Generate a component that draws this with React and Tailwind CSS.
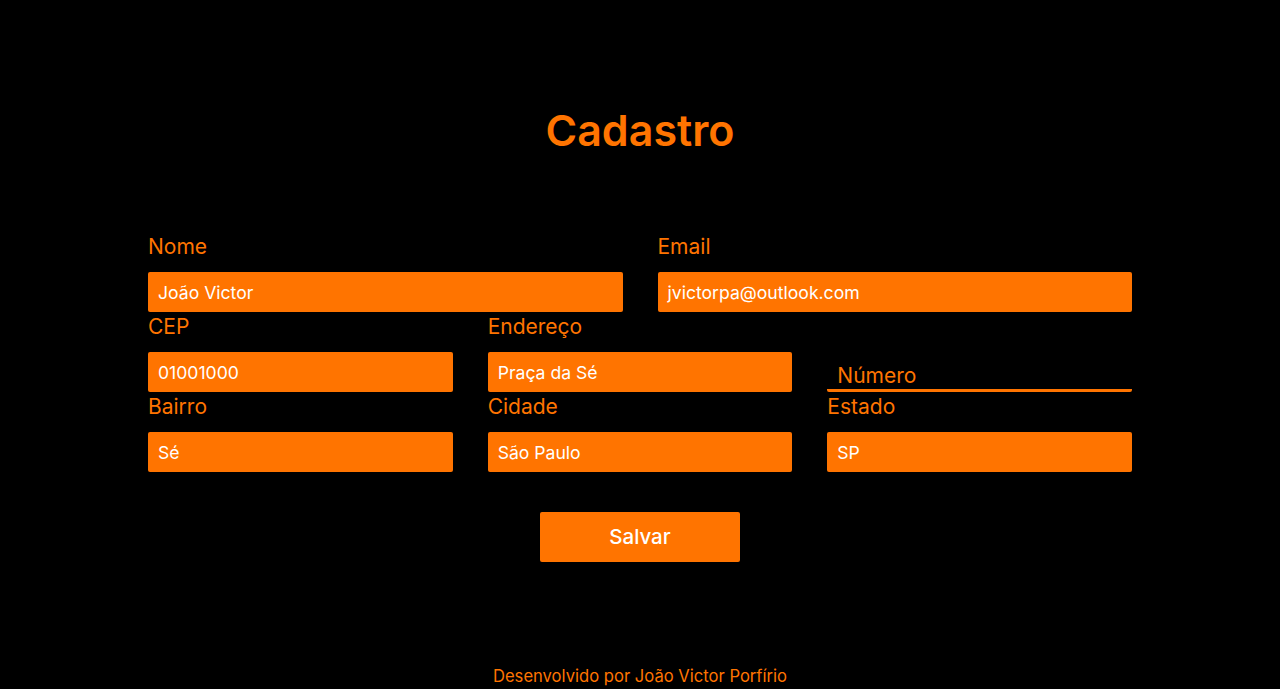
import React from "react";

const font = { fontFamily: "Inter, 'Noto Sans', sans-serif" };

function Field({ label, value }) {
  return (
    <div className="flex flex-col">
      <label className="h-[30px] mb-[10px] text-[21px] leading-[30px] text-[#ff7400]">{label}</label>
      <div className="h-[40px] bg-[#ff7400] rounded-[2px] px-[10px] pt-[3px] flex items-center text-[17.6px] text-white">
        {value}
      </div>
    </div>
  );
}

export default function App() {
  return (
    <div className="min-h-screen bg-black flex flex-col items-center" style={font}>
      <h1 className="mt-[100px] h-[60px] leading-[60px] text-[43px] font-semibold text-[#ff7400]">Cadastro</h1>

      <form className="mt-[72px] w-[984px] flex flex-col">
        <div className="grid grid-cols-2 gap-x-[35px]">
          <Field label="Nome" value="João Victor" />
          <Field label="Email" value="jvictorpa@outlook.com" />
        </div>
        <div className="grid grid-cols-3 gap-x-[35px]">
          <Field label="CEP" value="01001000" />
          <Field label="Endereço" value="Praça da Sé" />
          <div className="flex flex-col justify-end">
            <div className="h-[40px] border-b-[3px] border-[#ff7400] rounded-[2px] px-[10px] flex items-end text-[21px] leading-[26px] text-[#ff7400]">
              Número
            </div>
          </div>
        </div>
        <div className="grid grid-cols-3 gap-x-[35px]">
          <Field label="Bairro" value="Sé" />
          <Field label="Cidade" value="São Paulo" />
          <Field label="Estado" value="SP" />
        </div>
        <div className="flex justify-center mt-[40px]">
          <button type="button" className="w-[200px] h-[50px] bg-[#ff7400] rounded-[2px] text-white text-[20.5px] font-medium">
            Salvar
          </button>
        </div>
      </form>

      <footer className="mt-[102px] h-[24px] leading-[24px] text-[16.6px] text-[#ff7400]">
        Desenvolvido por João Victor Porfírio
      </footer>
    </div>
  );
}
